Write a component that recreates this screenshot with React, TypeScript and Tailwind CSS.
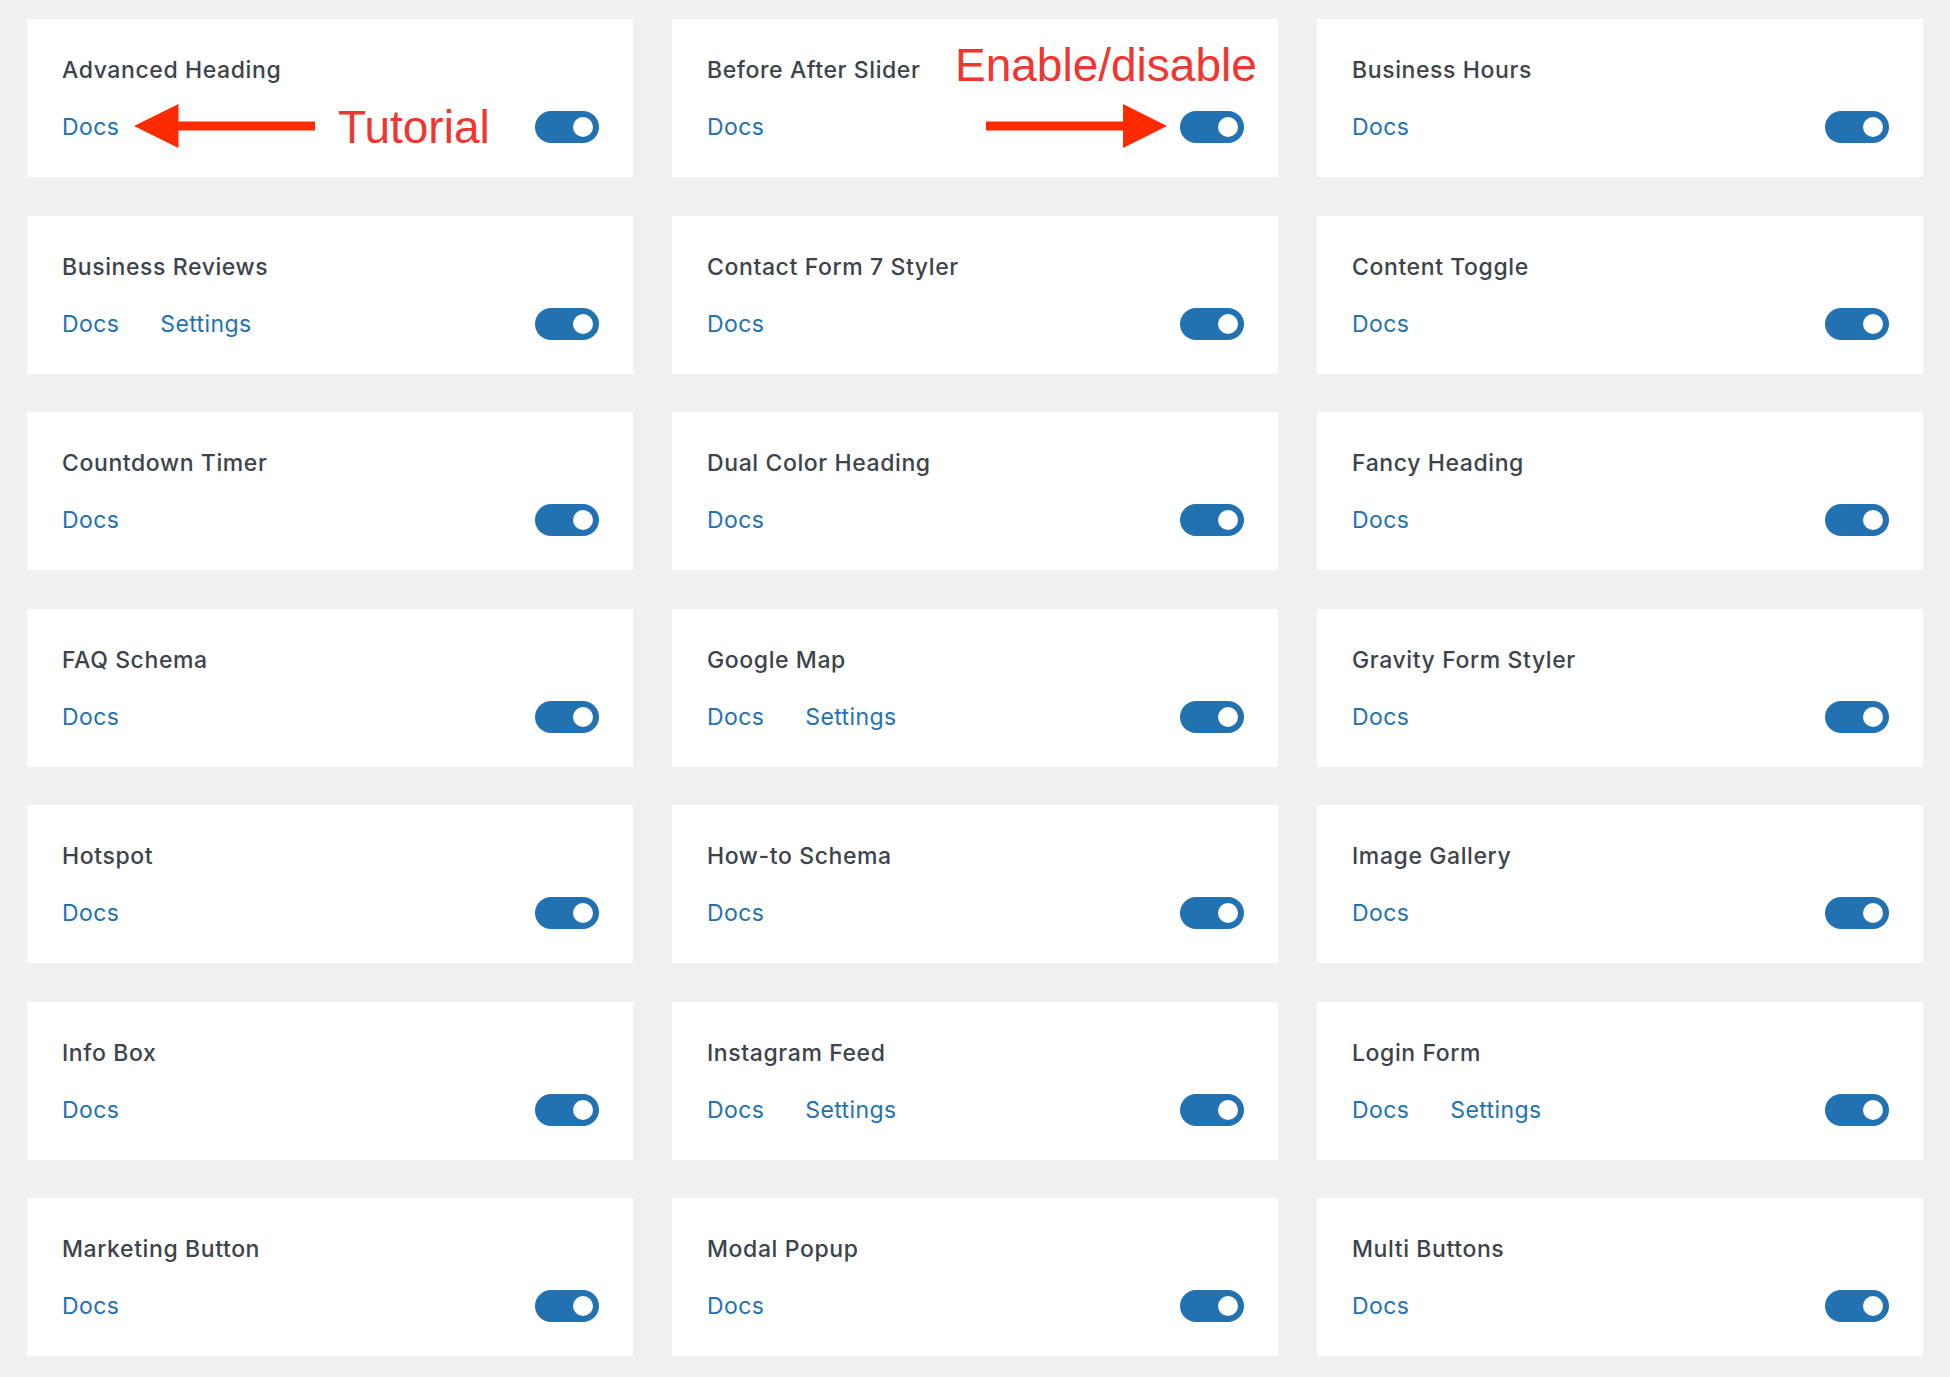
import React from "react";

type Widget = { name: string; settings?: boolean };

const WIDGETS: Widget[] = [
    { name: "Advanced Heading" },
    { name: "Before After Slider" },
    { name: "Business Hours" },
    { name: "Business Reviews", settings: true },
    { name: "Contact Form 7 Styler" },
    { name: "Content Toggle" },
    { name: "Countdown Timer" },
    { name: "Dual Color Heading" },
    { name: "Fancy Heading" },
    { name: "FAQ Schema" },
    { name: "Google Map", settings: true },
    { name: "Gravity Form Styler" },
    { name: "Hotspot" },
    { name: "How-to Schema" },
    { name: "Image Gallery" },
    { name: "Info Box" },
    { name: "Instagram Feed", settings: true },
    { name: "Login Form", settings: true },
    { name: "Marketing Button" },
    { name: "Modal Popup" },
    { name: "Multi Buttons" },
];

function Toggle() {
    return (
        <div className="relative w-[64px] h-8 rounded-full bg-[#2271b1] shrink-0">
            <div className="absolute right-[6px] top-[6px] w-5 h-5 rounded-full bg-white" />
        </div>
    );
}

// red annotation arrow, pointing left or right
function Arrow({ dir }: { dir: "left" | "right" }) {
    const d =
        dir === "left"
            ? "M0 22 L44.5 0 L44.5 17.5 L181 17.5 L181 26.5 L44.5 26.5 L44.5 44 Z"
            : "M181 22 L137 0 L137 17.5 L0 17.5 L0 26.5 L137 26.5 L137 44 Z";
    return (
        <svg width="181" height="44" viewBox="0 0 181 44">
            <path d={d} fill="#ff2a00" />
        </svg>
    );
}

function Card({ w, index }: { w: Widget; index: number }) {
    return (
        <div className="relative bg-white h-[158px] pl-[35px] pr-[34px] pt-[37px] flex flex-col">
            <h3 className="h-[28px] leading-[28px] text-[23px] font-medium text-[#3c434a] tracking-[0.6px]">
                {w.name}
            </h3>
            <div className="mt-[27px] h-8 flex items-center justify-between">
                <div className="flex items-center gap-[41px] text-[23px] leading-[28px] tracking-[0.4px] text-[#2271b1]">
                    <span>Docs</span>
                    {w.settings && <span>Settings</span>}
                </div>
                <Toggle />
            </div>

            {/* annotations from the screenshot */}
            {index === 0 && (
                <>
                    <div className="absolute left-[107px] top-[85px]">
                        <Arrow dir="left" />
                    </div>
                    <span className="absolute left-[311px] top-[80px] text-[46px] leading-[56px] text-[#f2352f] font-['Liberation_Sans',sans-serif]">
                        Tutorial
                    </span>
                </>
            )}
            {index === 1 && (
                <>
                    <div className="absolute left-[314px] top-[85px]">
                        <Arrow dir="right" />
                    </div>
                    <span className="absolute left-[283px] top-[18px] text-[46px] leading-[56px] text-[#f2352f] font-['Liberation_Sans',sans-serif]">
                        Enable/disable
                    </span>
                </>
            )}
        </div>
    );
}

export default function App() {
    return (
        <div className="min-h-screen bg-[#f0f0f1] font-['Inter',sans-serif] px-[27px] pt-[19px] pb-[21px]">
            <div className="grid grid-cols-3 gap-x-[39px] gap-y-[38.5px]">
                {WIDGETS.map((w, i) => (
                    <Card key={w.name} w={w} index={i} />
                ))}
            </div>
        </div>
    );
}
